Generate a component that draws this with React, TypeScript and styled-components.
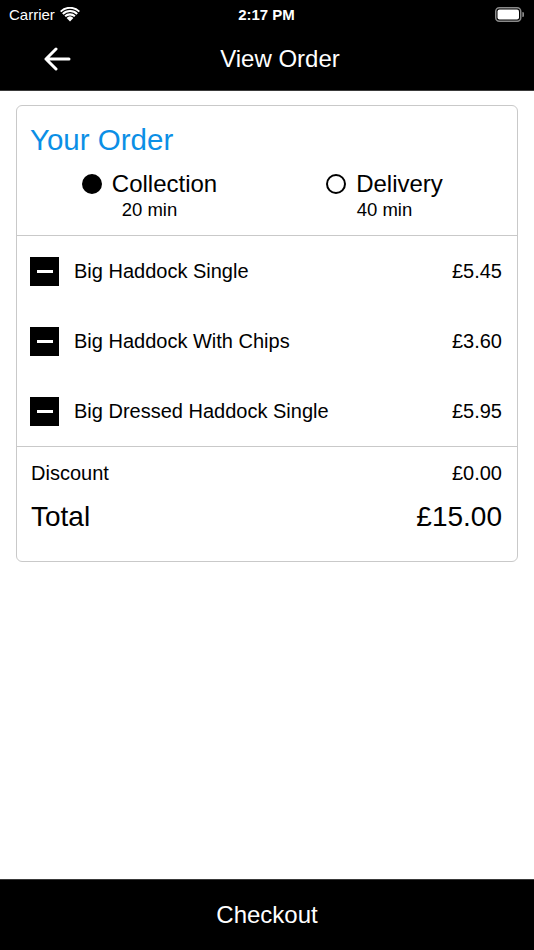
import React from 'react';
import styled, { createGlobalStyle } from 'styled-components';

const GlobalStyle = createGlobalStyle`
    html, body {
        margin: 0;
        padding: 0;
        background: #ffffff;
    }
    body {
        font-family: "Liberation Sans", Arial, sans-serif;
        color: #000000;
    }
`;

const Screen = styled.div`
    width: 534px;
    height: 950px;
    display: flex;
    flex-direction: column;
    background: #ffffff;
    overflow: hidden;
`;

const StatusBar = styled.div`
    height: 28px;
    background: #000000;
    color: #ffffff;
    display: grid;
    grid-template-columns: 1fr auto 1fr;
    align-items: center;
    padding: 0 10px 0 9px;
    font-size: 15px;
`;

const Carrier = styled.div`
    display: flex;
    align-items: center;
    gap: 5px;
`;

const Time = styled.div`
    font-weight: bold;
`;

const BatteryWrap = styled.div`
    display: flex;
    justify-content: flex-end;
`;

const NavBar = styled.div`
    height: 62px;
    background: #000000;
    color: #ffffff;
    display: grid;
    grid-template-columns: 80px 1fr 54px;
    align-items: center;
    border-bottom: 1px solid #3a3a3a;
`;

const BackButton = styled.div`
    padding-left: 43px;
    display: flex;
    align-items: center;
`;

const Title = styled.div`
    font-size: 24px;
    text-align: center;
`;

const Content = styled.div`
    flex: 1;
    padding: 14px 16px 0;
`;

const Card = styled.div`
    border: 1.5px solid #c9c9c9;
    border-radius: 6px;
`;

const CardHeader = styled.div`
    padding: 16px 15px 14px 13px;
    border-bottom: 1.5px solid #c9c9c9;
`;

const OrderTitle = styled.div`
    color: #0b8fe6;
    font-size: 29.5px;
    line-height: 36px;
`;

const Options = styled.div`
    display: grid;
    grid-template-columns: 1fr 1fr;
    margin-top: 12px;
    padding-left: 2px;
`;

const Option = styled.div`
    display: flex;
    flex-direction: column;
    align-items: center;
`;

const OptionLabel = styled.div`
    display: flex;
    align-items: center;
    gap: 10px;
    font-size: 24px;
    line-height: 28px;
`;

const Radio = styled.span<{ $checked: boolean }>`
    width: 20px;
    height: 20px;
    box-sizing: border-box;
    border-radius: 50%;
    border: 2px solid #000000;
    background: ${(p) => (p.$checked ? '#000000' : '#ffffff')};
`;

const OptionTime = styled.div`
    font-size: 18.5px;
    line-height: 22px;
    margin-top: 1px;
`;

const Items = styled.div`
    border-bottom: 1.5px solid #c9c9c9;
`;

const ItemRow = styled.div`
    height: 70px;
    display: flex;
    align-items: center;
    padding: 0 15px 0 13px;
    font-size: 20px;
`;

const MinusBox = styled.span`
    width: 29px;
    height: 29px;
    background: #000000;
    display: flex;
    align-items: center;
    justify-content: center;
    margin-right: 15px;
    flex-shrink: 0;

    &::after {
        content: '';
        width: 16px;
        height: 3px;
        background: #ffffff;
    }
`;

const ItemName = styled.span`
    flex: 1;
`;

const Price = styled.span``;

const Totals = styled.div`
    padding: 14px 15px 26px 14px;
    display: flex;
    flex-direction: column;
    gap: 14px;
`;

const TotalRow = styled.div<{ $big?: boolean }>`
    display: flex;
    justify-content: space-between;
    align-items: center;
    font-size: ${(p) => (p.$big ? '28px' : '20px')};
    line-height: ${(p) => (p.$big ? '36px' : '24px')};
`;

const CheckoutBar = styled.div`
    height: 70px;
    background: #000000;
    color: #ffffff;
    border-top: 1px solid #3a3a3a;
    display: flex;
    align-items: center;
    justify-content: center;
    font-size: 24px;
`;

const WifiIcon = () => (
    <svg width="20" height="15" viewBox="0 0 20 15">
        <path d="M10 14.5 L6.6 10.9 A5 5 0 0 1 13.4 10.9 Z" fill="#fff" />
        <path d="M4.4 8.6 A8 8 0 0 1 15.6 8.6 L14.2 10.1 A6 6 0 0 0 5.8 10.1 Z" fill="#fff" />
        <path d="M2.1 6.2 A11.3 11.3 0 0 1 17.9 6.2 L16.5 7.7 A9.3 9.3 0 0 0 3.5 7.7 Z" fill="#fff" />
        <path d="M0 3.9 A14.3 14.3 0 0 1 20 3.9 L18.6 5.3 A12.3 12.3 0 0 0 1.4 5.3 Z" fill="#fff" />
    </svg>
);

const BatteryIcon = () => (
    <svg width="29" height="15" viewBox="0 0 29 15">
        <rect x="0.75" y="0.75" width="25" height="13.5" rx="3.5" fill="none" stroke="#8a8a8a" strokeWidth="1.5" />
        <rect x="2.5" y="2.5" width="21.5" height="10" rx="2" fill="#fff" />
        <path d="M27.3 5 A2 2 0 0 1 27.3 10 Z" fill="#8a8a8a" />
    </svg>
);

const BackArrow = () => (
    <svg width="28" height="24" viewBox="0 0 28 24">
        <path d="M26 12 H3 M13 2 L3 12 L13 22" fill="none" stroke="#fff" strokeWidth="3" strokeLinecap="round" strokeLinejoin="round" />
    </svg>
);

const items = [
    { name: 'Big Haddock Single', price: '£5.45' },
    { name: 'Big Haddock With Chips', price: '£3.60' },
    { name: 'Big Dressed Haddock Single', price: '£5.95' },
];

export default function App() {
    return (
        <>
            <GlobalStyle />
            <Screen>
                <StatusBar>
                    <Carrier>
                        Carrier <WifiIcon />
                    </Carrier>
                    <Time>2:17 PM</Time>
                    <BatteryWrap>
                        <BatteryIcon />
                    </BatteryWrap>
                </StatusBar>
                <NavBar>
                    <BackButton>
                        <BackArrow />
                    </BackButton>
                    <Title>View Order</Title>
                    <div />
                </NavBar>
                <Content>
                    <Card>
                        <CardHeader>
                            <OrderTitle>Your Order</OrderTitle>
                            <Options>
                                <Option>
                                    <OptionLabel>
                                        <Radio $checked />
                                        Collection
                                    </OptionLabel>
                                    <OptionTime>20 min</OptionTime>
                                </Option>
                                <Option>
                                    <OptionLabel>
                                        <Radio $checked={false} />
                                        Delivery
                                    </OptionLabel>
                                    <OptionTime>40 min</OptionTime>
                                </Option>
                            </Options>
                        </CardHeader>
                        <Items>
                            {items.map((item) => (
                                <ItemRow key={item.name}>
                                    <MinusBox />
                                    <ItemName>{item.name}</ItemName>
                                    <Price>{item.price}</Price>
                                </ItemRow>
                            ))}
                        </Items>
                        <Totals>
                            <TotalRow>
                                <span>Discount</span>
                                <span>£0.00</span>
                            </TotalRow>
                            <TotalRow $big>
                                <span>Total</span>
                                <span>£15.00</span>
                            </TotalRow>
                        </Totals>
                    </Card>
                </Content>
                <CheckoutBar>Checkout</CheckoutBar>
            </Screen>
        </>
    );
}
